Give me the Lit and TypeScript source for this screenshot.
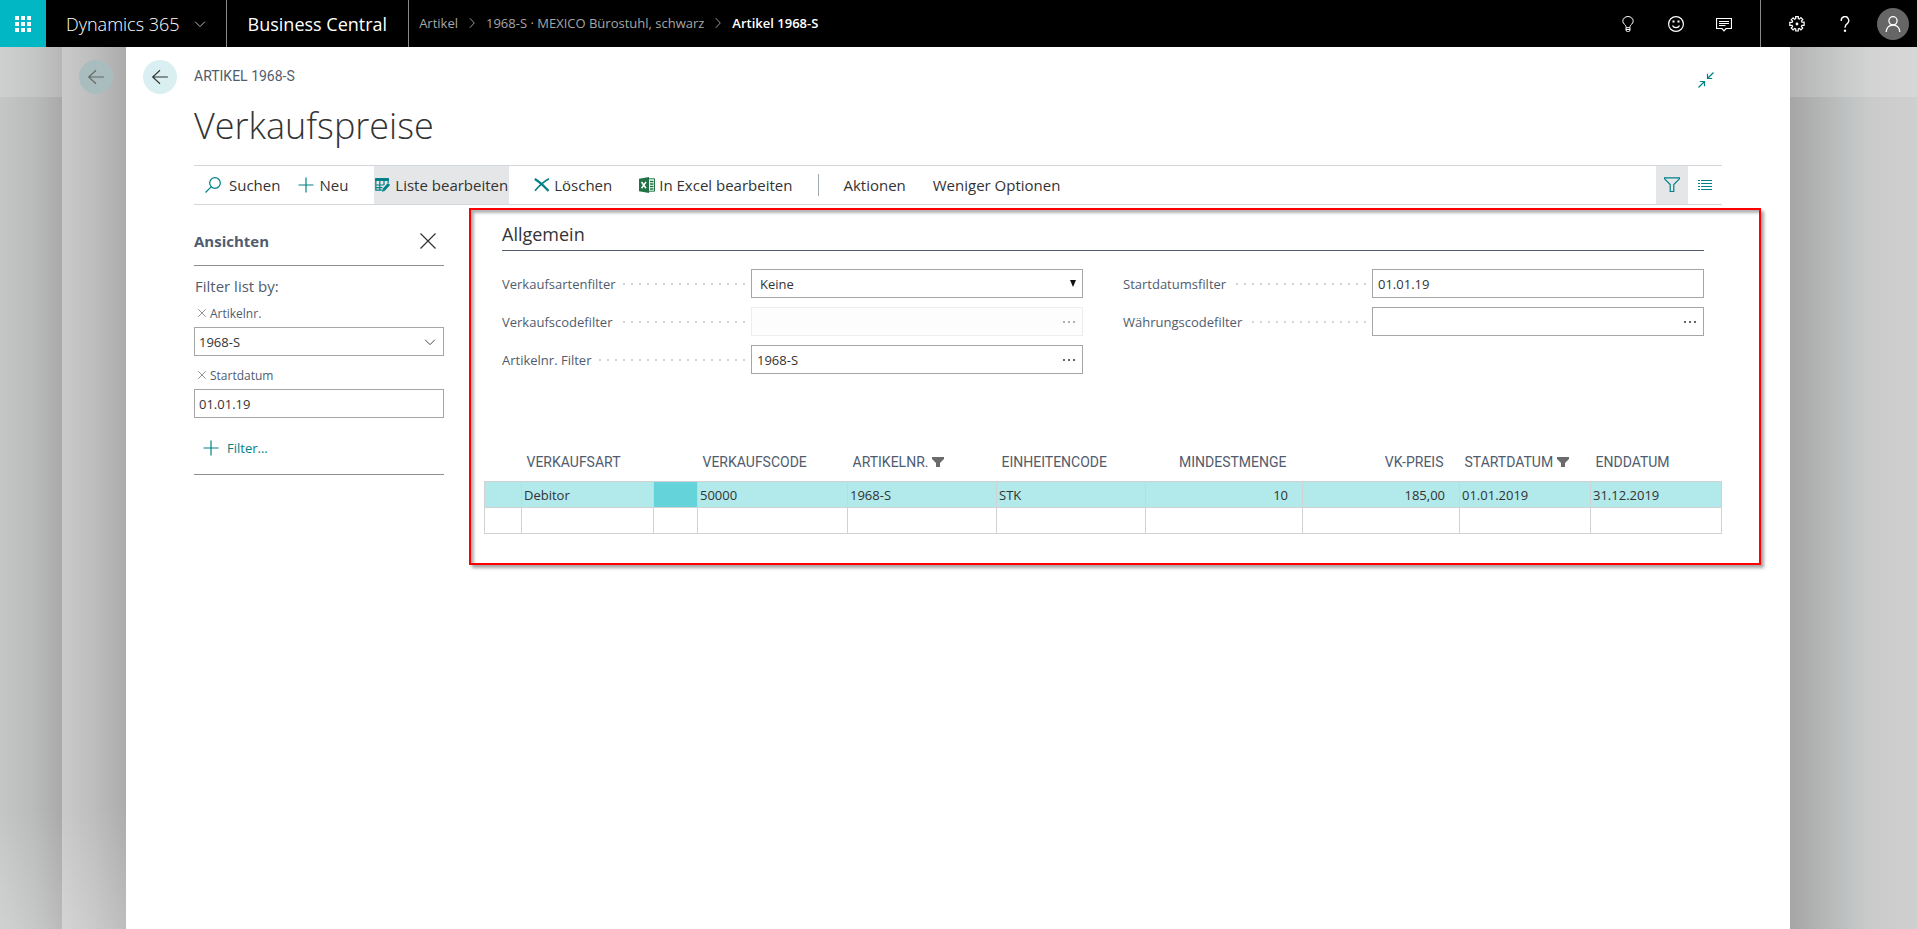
import { LitElement, html, css, svg, nothing, TemplateResult } from "lit";
import { customElement, property } from "lit/decorators.js";
import { classMap } from "lit/directives/class-map.js";

const stroke = (size: number, body: TemplateResult) => html`
  <svg width=${size} height=${size} viewBox="0 0 16 16" fill="none" stroke="currentColor" aria-hidden="true">${body}</svg>
`;

const icons = {
  waffle: html`<svg width="16" height="16" viewBox="0 0 16 16" fill="currentColor" aria-hidden="true">
    ${[0, 6, 12].map((y) => [0, 6, 12].map((x) => svg`<rect x=${x} y=${y} width="4" height="4" />`))}
  </svg>`,
  chevronDown: stroke(12, svg`<path d="M1.500 5 8 11.500 14.500 5" stroke-width="1.200" />`),
  chevronRight: stroke(12, svg`<path d="M5 1.500 11 8 5 14.500" stroke-width="1.200" />`),
  bulb: stroke(16, svg`<path d="M6 11.500V10.500C5.800 8.500 2.800 8 2.800 5.200a5.200 4.700 0 0 1 10.400 0C13.200 8 10.200 8.500 10 10.500v1M6 11.700h4V14a1.500 1.500 0 0 1-1.500 1.500h-1A1.500 1.500 0 0 1 6 14zM6 13.500h4" />`),
  smiley: stroke(16, svg`<circle cx="8" cy="8" r="7.400" stroke-width="1.200" /><path d="M4.500 9.500a3.700 3.200 0 0 0 7 0" stroke-width="1.200" /><path d="M4.500 5.500h2M9.500 5.500h2" stroke-width="2" />`),
  chat: stroke(16, svg`<path d="M.5 2.500h15v10h-5.500L8 14.800 6 12.500H.5z" stroke-width="1.200" /><path d="M3 5.500h10M3 7.500h10M3 9.500h6.500" />`),
  gear: stroke(16, svg`<path stroke-width="1.200" d="M6.700 2.600V.7h2.600v1.900l1.200.5 1.400-1.400 1.900 1.900-1.400 1.400.5 1.200h2.200v3.200h-2.200l-.5 1.200 1.400 1.400-1.900 1.900-1.400-1.400-1.200.5v2H6.700v-2l-1.200-.5-1.400 1.400-1.900-1.900 1.400-1.400-.5-1.200H.8V6.300h2.300l.5-1.200-1.400-1.400 1.900-1.900 1.400 1.400z" /><circle cx="8" cy="8" r="1.400" fill="currentColor" stroke="none" />`),
  help: stroke(16, svg`<path d="M4.300 5A3.700 3.900 0 1 1 10.200 7.600C8.600 8.800 8 9.600 8 11.700" stroke-width="1.400" /><circle cx="8" cy="14.700" r="1.200" fill="currentColor" stroke="none" />`),
  person: stroke(16, svg`<circle cx="8" cy="4.800" r="4.100" stroke-width="1.300" /><path d="M1.200 16C1.500 11.500 4.500 9 8 9s6.500 2.500 6.800 7" stroke-width="1.300" />`),
  back: stroke(18, svg`<path d="M15 8H1.500M8 2 1.500 8 8 14" />`),
  collapse: stroke(16, svg`<path d="M15.500.5 10 6M9.500 1.800v4.700h4.700M.5 15.500 6 10M1.800 9.500h4.700v4.700" stroke-width="1.200" />`),
  search: stroke(16, svg`<circle cx="10" cy="6" r="5.300" stroke-width="1.200" /><path d="M6.200 9.800.5 15.500" stroke-width="1.200" />`),
  plus: stroke(16, svg`<path d="M8 .5v15M.5 8h15" stroke-width="1.200" />`),
  remove: html`<svg width="16" height="14" viewBox="0 0 16 14" fill="none" stroke="currentColor" aria-hidden="true"><path d="M.8 1C5 3.500 10 8 14.500 13" stroke-width="2.200" /><path d="M15 .8C9 4 5 8 1 12.800" stroke-width="1.600" /></svg>`,
  editList: html`<svg width="16" height="14" viewBox="0 0 16 14" fill="none" stroke="currentColor" aria-hidden="true">
    <path d="M.8 1h12.400v4M.8 1v11.200h6M.8 7h8M.8 9.700h6.500M4.800 3v9.200M9 3v4" stroke-width="1.200" /><path d="M.2 1.500h13.600" stroke-width="3" />
    <path d="m8.500 12 5.500-6" stroke-width="3" /><path d="m7 13.700.6-2.600 2 1.800z" fill="currentColor" stroke="none" /></svg>`,
  excel: html`<svg width="16" height="16" viewBox="0 0 16 16" aria-hidden="true">
    <path d="M9.500 1.800h6v12.400h-6" fill="#fff" stroke="#217346" /><path d="M0 1.800 10 0v16L0 14.200z" fill="#217346" />
    <path d="m2.500 5 4.500 6.300M7 5l-4.500 6.300" stroke="#fff" stroke-width="1.500" /><path d="M11 4.500h3.500M11 7h3.500M11 9.500h3.500M11 12h3.500" stroke="#217346" stroke-width="1.400" /></svg>`,
  funnel: stroke(16, svg`<path d="M.6.800h14.800v1L9.800 7.500v7H6.200v-7L.6 1.800z" stroke-width="1.200" />`),
  list: html`<svg width="14" height="11" viewBox="0 0 14 11" fill="none" stroke="currentColor" aria-hidden="true"><path d="M0 .5h2M0 3.500h2M0 6.500h2M0 9.500h2M3 .5h11M3 3.500h11M3 6.500h11M3 9.500h11" /></svg>`,
  cross: stroke(16, svg`<path d="m.5.5 15 15M15.500.5l-15 15" stroke-width="1.200" />`),
  smallCross: stroke(8, svg`<path d="m.5.5 15 15M15.500.5l-15 15" stroke-width="1.600" />`),
  solidFunnel: html`<svg width="12" height="10" viewBox="0 0 12 10" fill="currentColor" aria-hidden="true"><path d="M0 0h12v2L8 6v4H4V6L0 2z" /></svg>`,
  triangle: html`<svg class="triangle" width="6" height="7" viewBox="0 0 6 7" fill="currentColor" aria-hidden="true"><path d="M0 0h6L3 7z" /></svg>`,
  dots: html`<svg width="12" height="2" viewBox="0 0 12 2" fill="currentColor" fill-opacity="0.750" aria-hidden="true"><path d="M0 0h2v2H0zM5 0h2v2H5zM10 0h2v2h-2z" /></svg>`,
};

const base = css`
  * { box-sizing: border-box; }
  svg { display: block; flex: none; }
  button, input, select { font: inherit; color: inherit; margin: 0; padding: 0; border: 0; background: none; border-radius: 0; }
  button { display: inline-flex; align-items: center; cursor: pointer; }
  a { color: inherit; text-decoration: none; }
  h1, h2 { margin: 0; }
`;

@customElement("bc-topbar")
class Topbar extends LitElement {
  static styles = [base, css`
    :host { display: flex; height: 47px; background: #000; color: #fff; }
    .waffle { width: 46px; justify-content: center; background: #00b7c3; }
    .suite { gap: 14px; padding: 0 20px; font-size: 18px; border-right: 1px solid #8a8a8a; font-weight: 300; }
    .suite svg { color: #ccc; }
    .product { display: flex; align-items: center; padding: 0 21px; font-size: 18px; border-right: 1px solid #8a8a8a; }
    .crumbs { display: flex; align-items: center; gap: 8px; flex: 1; padding: 0 10px 2px; color: #a6a6a6; font-size: 13px; }
    .current { color: #fff; font-weight: 600; }
    .tools { display: flex; }
    .tools button { width: 48px; justify-content: center; }
    .line { width: 1px; margin: 0 12px; background: #8a8a8a; }
    .avatar { display: flex; align-items: center; justify-content: center; width: 32px; height: 32px; border-radius: 50%; background: #666; }
  `];

  render() {
    return html`
      <button class="waffle" aria-label="App-Startfeld">${icons.waffle}</button>
      <button class="suite">Dynamics 365 ${icons.chevronDown}</button>
      <a class="product" href="#">Business Central</a>
      <nav class="crumbs">
        <a href="#">Artikel</a>${icons.chevronRight}
        <a href="#">1968-S · MEXICO Bürostuhl, schwarz</a>${icons.chevronRight}
        <a class="current" href="#">Artikel 1968-S</a>
      </nav>
      <div class="tools">
        <button aria-label="Tipps">${icons.bulb}</button>
        <button aria-label="Feedback">${icons.smiley}</button>
        <button aria-label="Nachrichten">${icons.chat}</button>
        <span class="line"></span>
        <button aria-label="Einstellungen">${icons.gear}</button>
        <button aria-label="Hilfe">${icons.help}</button>
        <button aria-label="Konto"><span class="avatar">${icons.person}</span></button>
      </div>
    `;
  }
}

@customElement("bc-toolbar")
class Toolbar extends LitElement {
  static styles = [base, css`
    :host { display: flex; height: 40px; border: solid #d2d5d9; border-width: 1px 0; font-size: 15px; color: #333; }
    button { white-space: nowrap; }
    svg { color: #008089; }
    .search { gap: 8px; padding: 0 9px 0 11px; }
    .new { gap: 5px; padding: 0 9px; margin-right: 17px; }
    .edit { gap: 4px; padding: 0 1px; background: #e5e6e8; }
    .delete { gap: 4px; padding: 0 2px; margin-left: 23px; }
    .excel { gap: 4px; padding: 0 2px; margin-left: 23px; }
    .line { width: 1px; margin: 8px 24px; background: #a3a9b2; }
    .more { gap: 27px; display: flex; flex: 1; }
    .view { width: 32px; justify-content: center; }
    .active { background: #e5e6e8; }
    .list { width: 34px; justify-content: center; }
  `];

  render() {
    return html`
      <button class="search">${icons.search}Suchen</button>
      <button class="new">${icons.plus}Neu</button>
      <button class="edit" aria-pressed="true">${icons.editList}Liste bearbeiten</button>
      <button class="delete">${icons.remove}Löschen</button>
      <button class="excel">${icons.excel}In Excel bearbeiten</button>
      <span class="line"></span>
      <div class="more"><button>Aktionen</button><button>Weniger Optionen</button></div>
      <button class="view active" aria-label="Filterbereich" aria-pressed="true">${icons.funnel}</button>
      <button class="list" aria-label="Listenansicht">${icons.list}</button>
    `;
  }
}

@customElement("bc-filter-pane")
class FilterPane extends LitElement {
  static styles = [base, css`
    :host { display: block; color: #505c6d; }
    .head { display: flex; justify-content: space-between; align-items: center; height: 49px; padding-right: 8px; border-bottom: 1px solid #8f8f8f; }
    h2 { font-size: 15px; font-weight: 700; }
    .close { color: #333; }
    .hint { margin: 8px 1px 5px; font-size: 15px; line-height: 24px; }
    .name { display: flex; align-items: center; gap: 4px; height: 20px; padding-left: 4px; font-size: 12px; margin-bottom: 4px; }
    .name button { color: #777; }
    .box { display: flex; align-items: center; height: 29px; margin-bottom: 9px; border: 1px solid #a6a6a6; color: #333; font-size: 13px; }
    input { flex: 1; min-width: 0; height: 100%; padding: 0 4px; }
    .drop { padding: 0 7px; height: 100%; }
    .add { gap: 8px; margin: 9px 9px 14px; height: 24px; color: #008089; font-size: 13px; }
    .foot { border-bottom: 1px solid #8f8f8f; }
  `];

  render() {
    return html`
      <div class="head"><h2>Ansichten</h2><button class="close" aria-label="Schließen">${icons.cross}</button></div>
      <p class="hint">Filter list by:</p>
      <div class="name"><button aria-label="Artikelnr. entfernen">${icons.smallCross}</button><label for="item">Artikelnr.</label></div>
      <div class="box"><input id="item" value="1968-S" /><button class="drop" aria-label="Auswahl öffnen">${icons.chevronDown}</button></div>
      <div class="name"><button aria-label="Startdatum entfernen">${icons.smallCross}</button><label for="start">Startdatum</label></div>
      <div class="box"><input id="start" value="01.01.19" /></div>
      <div class="foot"><button class="add">${icons.plus}Filter...</button></div>
    `;
  }
}

@customElement("bc-field")
class Field extends LitElement {
  @property() label = "";
  @property() value = "";
  @property() kind: "text" | "lookup" | "select" = "text";
  @property({ type: Boolean }) disabled = false;

  static styles = [base, css`
    :host { display: grid; grid-template-columns: 3fr 4fr; align-items: center; font-size: 13px; color: #505c6d; }
    .caption { display: flex; align-items: center; gap: 7px; padding-right: 6px; white-space: nowrap; }
    .leader { flex: 1; height: 2px; background: repeating-linear-gradient(to left, #d4d4d4 0 2px, transparent 2px 8px); }
    .box { display: flex; align-items: center; height: 29px; border: 1px solid #a6a6a6; color: #333; }
    .off { border-color: #ededed; background: #fdfdfd; }
    .off button { opacity: 0.5; }
    input, select { flex: 1; min-width: 0; height: 100%; padding: 0 5px; }
    select { appearance: none; padding: 0 8px; }
    button { height: 100%; padding: 0 7px; }
    .triangle { margin-right: 6px; pointer-events: none; color: #111; }
  `];

  render() {
    return html`
      <div class="caption"><label for="control">${this.label}</label><span class="leader"></span></div>
      <div class=${classMap({ box: true, off: this.disabled })}>
        ${this.kind === "select"
          ? html`<select id="control"><option>${this.value}</option></select>${icons.triangle}`
          : html`<input id="control" .value=${this.value} ?disabled=${this.disabled} />`}
        ${this.kind === "lookup"
          ? html`<button aria-label="Nachschlagen" ?disabled=${this.disabled}>${icons.dots}</button>`
          : nothing}
      </div>
    `;
  }
}

interface Column { title: string; value: string; width: number; filtered?: boolean; numeric?: boolean; marked?: boolean }

const columns: Column[] = [
  { title: "", value: "", width: 37 },
  { title: "VERKAUFSART", value: "Debitor", width: 132 },
  { title: "", value: "", width: 44, marked: true },
  { title: "VERKAUFSCODE", value: "50000", width: 150 },
  { title: "ARTIKELNR.", value: "1968-S", width: 149, filtered: true },
  { title: "EINHEITENCODE", value: "STK", width: 149 },
  { title: "MINDESTMENGE", value: "10", width: 157, numeric: true },
  { title: "VK-PREIS", value: "185,00", width: 157, numeric: true },
  { title: "STARTDATUM", value: "01.01.2019", width: 131, filtered: true },
  { title: "ENDDATUM", value: "31.12.2019", width: 131 },
];
const totalWidth = columns.reduce((sum, c) => sum + c.width, 0);

@customElement("bc-price-table")
class PriceTable extends LitElement {
  static styles = [base, css`
    :host { display: block; }
    table { width: 100%; table-layout: fixed; border-collapse: collapse; font-size: 13px; color: #333; }
    th { height: 38px; padding: 0 5px; text-align: left; font-family: Roboto, sans-serif; font-size: 14px; font-weight: 400; color: #505c6d; white-space: nowrap; }
    .title { display: flex; align-items: center; gap: 4px; }
    .title svg { color: #6b6b6b; }
    .numeric .title { justify-content: flex-end; }
    td { height: 26px; padding: 1px 2px 0; border: 1px solid #d2d2d2; }
    .selected td { background: #b2e9eb; }
    .selected .marked { background: #64d4da; }
    th.numeric { padding-right: 16px; }
    td.numeric { padding-right: 14px; text-align: right; }
  `];

  render() {
    return html`
      <table>
        <colgroup>${columns.map((c) => html`<col style="width:${(c.width / totalWidth) * 100}%" />`)}</colgroup>
        <thead><tr>${columns.map((c) => html`
          <th class=${classMap({ numeric: !!c.numeric })}><span class="title">${c.title}${c.filtered ? icons.solidFunnel : nothing}</span></th>`)}</tr></thead>
        <tbody>
          <tr class="selected">${columns.map((c) => html`<td class=${classMap({ numeric: !!c.numeric, marked: !!c.marked })}>${c.value}</td>`)}</tr>
          <tr>${columns.map(() => html`<td></td>`)}</tr>
        </tbody>
      </table>
    `;
  }
}

@customElement("app-root")
class AppRoot extends LitElement {
  static styles = [base, css`
    :host { display: flex; flex-direction: column; min-height: 100vh; font-family: "Open Sans", "Noto Sans", sans-serif; color: #333; }
    .stack { flex: 1; display: grid; grid-template-columns: 62px 64px minmax(0, 1fr) 127px; }
    .backdrop { background: linear-gradient(rgba(255, 255, 255, 0.16) 50px, transparent 50px), linear-gradient(to top, rgba(255, 255, 255, 0.2), transparent 120px), linear-gradient(to right, #c5c7c6, #b9bbba 55%, #a9a9a9); }
    .backdrop-right { background: linear-gradient(rgba(255, 255, 255, 0.16) 50px, transparent 50px), linear-gradient(to right, #a5a5a5, #b5b7b6 28%, #c3c6c6 52%, #cbcbcb 66%, #cfcfcf); }
    .under { padding: 13px 0 0 17px; background: linear-gradient(to top, rgba(255, 255, 255, 0.2), transparent 120px), linear-gradient(to right, #cacaca, #bdbdbd 50%, #acacac); }
    .round { display: flex; align-items: center; justify-content: center; width: 34px; height: 34px; border-radius: 50%; background: #d9eff1; color: #333; }
    .under .round { background: #a9bdbe; color: #666; }
    .sheet { background: #fff; padding: 13px 0 40px 68px; }
    .top { display: flex; align-items: center; gap: 17px; margin: 0 76px 0 -51px; height: 34px; }
    .caption { flex: 1; font-family: Roboto, sans-serif; font-size: 14px; line-height: 16px; padding-bottom: 2px; color: #505c6d; }
    .collapse { color: #008089; align-self: flex-end; padding-bottom: 6px; }
    h1 { font-size: 36px; font-weight: 300; line-height: 60px; margin: 2px 0 9px; }
    .bar { margin-right: 68px; }
    .body { display: grid; grid-template-columns: 250px minmax(0, 1fr); gap: 25px; padding-right: 29px; align-items: start; }
    .pane { margin-top: 12px; }
    .frame { margin-top: 3px; padding: 12px 37px 29px 13px; border: 2px solid #f00; box-shadow: 3px 3px 3px rgba(0, 0, 0, 0.35), inset 3px 3px 3px rgba(0, 0, 0, 0.3); }
    .general { margin: 0 18px 69px; }
    .general h2 { font-size: 18px; font-weight: 500; line-height: 24px; padding-bottom: 4px; border-bottom: 1px solid #505c6d; margin-bottom: 18px; }
    .fields { display: grid; grid-template-columns: 1fr 1fr; column-gap: 40px; align-items: start; }
    .column { display: grid; row-gap: 9px; }
  `];

  render() {
    return html`
      <bc-topbar></bc-topbar>
      <div class="stack">
        <div class="backdrop"></div>
        <div class="under"><span class="round">${icons.back}</span></div>
        <main class="sheet">
          <div class="top">
            <button class="round" aria-label="Zurück">${icons.back}</button>
            <span class="caption">ARTIKEL 1968-S</span>
            <button class="collapse" aria-label="Verkleinern">${icons.collapse}</button>
          </div>
          <h1>Verkaufspreise</h1>
          <bc-toolbar class="bar"></bc-toolbar>
          <div class="body">
            <bc-filter-pane class="pane"></bc-filter-pane>
            <div class="frame">
              <section class="general">
                <h2>Allgemein</h2>
                <div class="fields">
                  <div class="column">
                    <bc-field label="Verkaufsartenfilter" kind="select" value="Keine"></bc-field>
                    <bc-field label="Verkaufscodefilter" kind="lookup" disabled></bc-field>
                    <bc-field label="Artikelnr. Filter" kind="lookup" value="1968-S"></bc-field>
                  </div>
                  <div class="column">
                    <bc-field label="Startdatumsfilter" value="01.01.19"></bc-field>
                    <bc-field label="Währungscodefilter" kind="lookup"></bc-field>
                  </div>
                </div>
              </section>
              <bc-price-table></bc-price-table>
            </div>
          </div>
        </main>
        <div class="backdrop-right"></div>
      </div>
    `;
  }
}
